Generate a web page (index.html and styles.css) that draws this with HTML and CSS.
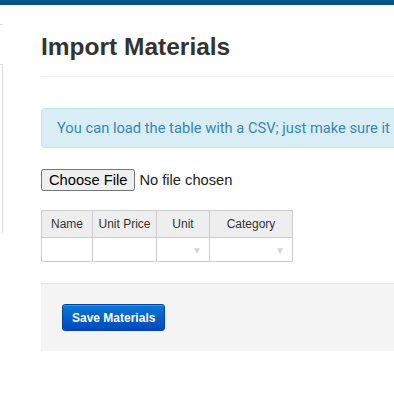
FILE: index.html
```html
<!DOCTYPE html>
<html>
<head>
  <meta name="viewport" content="width=device-width, initial-scale=1.0">
  <link rel="stylesheet" href="styles.css">
</head>
<body>
  <div class="topbar"></div>

  <div class="layout">
    <aside class="sidebar">
      <div class="side-top"></div>
      <div class="side-panel"></div>
    </aside>

    <main class="content">
      <h1 class="page-title">Import Materials</h1>

      <div class="alert-info">You can load the table with a CSV; just make sure it has the right columns in the right order.</div>

      <input type="file" class="file-input">

      <table class="grid">
        <thead>
          <tr>
            <th class="col-name">Name</th>
            <th class="col-price">Unit Price</th>
            <th class="col-unit">Unit</th>
            <th class="col-cat">Category</th>
          </tr>
        </thead>
        <tbody>
          <tr>
            <td></td>
            <td></td>
            <td class="dropdown"><span class="caret">&#9660;</span></td>
            <td class="dropdown"><span class="caret">&#9660;</span></td>
          </tr>
        </tbody>
      </table>

      <div class="form-actions">
        <button class="btn-primary">Save Materials</button>
      </div>
    </main>
  </div>
</body>
</html>
```

FILE: styles.css
```css
html, body {
  overflow: hidden;
}

body {
  margin: 0;
  padding: 0;
  font-family: "Liberation Sans", Arial, sans-serif;
  color: #333;
  background: #fff;
}

.topbar {
  height: 5px;
  background: #005585;
}

.layout {
  display: flex;
  width: 520px;
}

.sidebar {
  width: 3px;
  flex-shrink: 0;
}

.side-top {
  margin-top: 19px;
  border-top: 1px solid #ddd;
}

.side-panel {
  margin-top: 39px;
  height: 168px;
  border-top: 1px solid #ddd;
  border-right: 1px solid #ddd;
}

.content {
  flex: 1;
  margin-left: 38px;
}

.page-title {
  font-family: "Liberation Sans", Arial, sans-serif;
  font-size: 24.5px;
  font-weight: bold;
  color: #333;
  margin: 0;
  padding: 28px 0 15px;
  line-height: 28px;
  border-bottom: 1px solid #eee;
}

.alert-info {
  margin-top: 31px;
  padding: 10px 15px;
  font-family: Roboto, "Liberation Sans", sans-serif;
  font-size: 14.7px;
  line-height: 18px;
  color: #3a87ad;
  background: #d9edf7;
  border: 1px solid #bce8f1;
  border-radius: 4px;
  white-space: nowrap;
}

.file-input {
  display: block;
  margin-top: 21px;
  font-family: "Liberation Sans", Arial, sans-serif;
  font-size: 14.7px;
  color: #222;
}

.grid {
  margin-top: 19px;
  border-collapse: collapse;
  table-layout: fixed;
  width: 252px;
  font-size: 12px;
  color: #333;
}

.grid th {
  height: 26px;
  padding: 0;
  background: #eee;
  font-weight: normal;
  white-space: nowrap;
  border: 1px solid #ccc;
}

.grid td {
  height: 23px;
  padding: 0;
  border: 1px solid #ccc;
}

.col-name { width: 50px; }
.col-price { width: 63px; }
.col-unit { width: 52px; }
.col-cat { width: 82px; }

.dropdown {
  text-align: right;
}

.caret {
  font-size: 10px;
  color: #d6d6d6;
  padding-right: 7px;
}

.form-actions {
  margin-top: 21px;
  padding: 20px 21px;
  background: #f4f4f4;
  border-top: 1px solid #e5e5e5;
  height: 27px;
}

.btn-primary {
  display: block;
  height: 27px;
  padding: 0 9px;
  font-family: "Liberation Sans", Arial, sans-serif;
  font-size: 12px;
  font-weight: bold;
  color: #fff;
  background: linear-gradient(#0a7ad4, #0047bd);
  border: 1px solid #0044aa;
  border-radius: 3px;
  box-shadow: inset 0 1px 0 rgba(255, 255, 255, 0.2);
}
```
